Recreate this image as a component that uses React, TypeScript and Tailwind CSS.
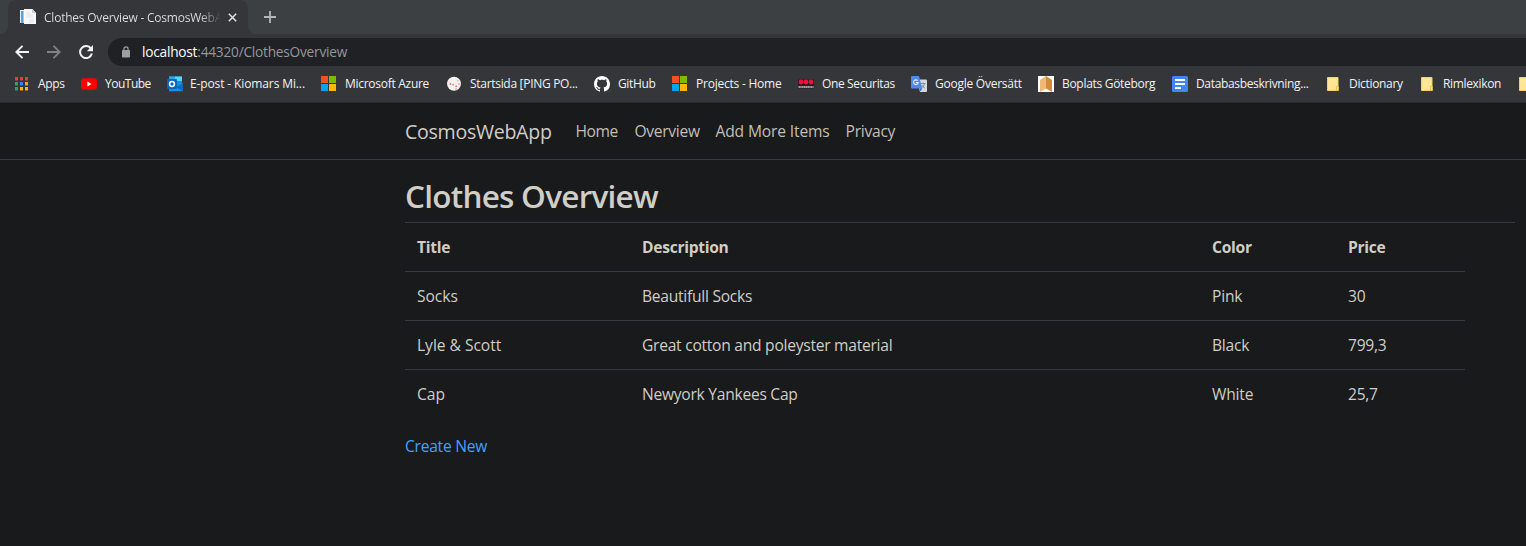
import type { ReactNode } from 'react';

function MicrosoftIcon() {
  return (
    <svg width="16" height="16" viewBox="0 0 16 16" shapeRendering="crispEdges">
      <path fill="#f25022" d="M0 0h7v7H0z" />
      <path fill="#7fba00" d="M8 0h7v7H8z" />
      <path fill="#00a4ef" d="M0 8h7v7H0z" />
      <path fill="#ffb900" d="M8 8h7v7H8z" />
    </svg>
  );
}

function AppsIcon() {
  const colors = ['#ee3a36', '#ee3a36', '#ee3a36', '#34a25a', '#2a86f3', '#f3a90c', '#34a25a', '#f3b40c', '#f3b40c'];
  return (
    <svg width="14" height="14" viewBox="0 0 14 14" shapeRendering="crispEdges">
      {colors.map((c, i) => (
        <g key={i}>
          <rect x={(i % 3) * 5} y={Math.floor(i / 3) * 5} width="3" height="3" fill={c} />
          <rect x={(i % 3) * 5} y={Math.floor(i / 3) * 5 + 3} width="3" height="1" fill={c} opacity="0.45" />
        </g>
      ))}
    </svg>
  );
}

function YouTubeIcon() {
  return (
    <svg width="16" height="16" viewBox="0 0 16 16">
      <rect x="0" y="2.3" width="16" height="11.4" rx="3" fill="#f00" />
      <path d="M6.4 5.6v4.8L10.6 8z" fill="#fff" />
    </svg>
  );
}

function OutlookIcon() {
  return (
    <svg width="16" height="16" viewBox="0 0 16 16">
      <path d="M2 .5h13v9H2z" fill="#1490df" />
      <path d="M8 .5h7V5H8z" fill="#50d9ff" />
      <path d="M2 .5h6V5H2z" fill="#28a8ea" />
      <path d="M2 8 16 7.5v7.8H2z" fill="#1a8fe0" />
      <path d="M16 7.5v7.8L9 11z" fill="#1068b8" />
      <rect x="0" y="3" width="10" height="10" rx="1" fill="#0a64bd" />
      <circle cx="5" cy="8" r="2.4" fill="none" stroke="#fff" strokeWidth="1.5" />
    </svg>
  );
}

function PingPongIcon() {
  return (
    <svg width="16" height="16" viewBox="0 0 16 16">
      <circle cx="7" cy="7.8" r="7" fill="#f6f2f0" />
      <g fill="#e0584e" opacity=".8">
        <circle cx="3.4" cy="8" r=".9" />
        <circle cx="6.2" cy="8.600" r=".9" />
        <circle cx="9.2" cy="10.200" r="1" />
        <circle cx="12" cy="8" r=".8" />
        <circle cx="9" cy="13" r=".7" />
      </g>
      <circle cx="10.8" cy="4.600" r=".9" fill="#eeb3ac" />
    </svg>
  );
}

function GitHubIcon() {
  return (
    <svg width="16" height="16" viewBox="0 0 16 16" fill="#fff">
      <path d="M8 0C3.58 0 0 3.58 0 8c0 3.54 2.29 6.53 5.47 7.59.4.07.55-.17.55-.38 0-.19-.01-.82-.01-1.49-2.01.37-2.53-.49-2.69-.94-.09-.23-.48-.94-.82-1.13-.28-.15-.68-.52-.01-.53.63-.01 1.08.58 1.23.82.72 1.21 1.87.87 2.33.66.07-.52.28-.87.51-1.07-1.78-.2-3.64-.89-3.64-3.95 0-.87.31-1.59.82-2.15-.08-.2-.36-1.02.08-2.12 0 0 .67-.21 2.2.82.64-.18 1.32-.27 2-.27s1.36.09 2 .27c1.53-1.04 2.2-.82 2.2-.82.44 1.1.16 1.92.08 2.12.51.56.82 1.27.82 2.15 0 3.07-1.87 3.75-3.65 3.95.29.25.54.73.54 1.48 0 1.07-.01 1.93-.01 2.2 0 .21.15.46.55.38A8.01 8.01 0 0 0 16 8c0-4.42-3.58-8-8-8z" />
    </svg>
  );
}

function SecuritasIcon() {
  return (
    <svg width="16" height="16" viewBox="0 0 16 16">
      <path d="M0 3.5h16v9H0z" fill="#30191d" />
      <g fill="#f0103c">
        <circle cx="3" cy="6" r="2.4" />
        <circle cx="8" cy="6" r="2.4" />
        <circle cx="13" cy="6" r="2.4" />
      </g>
      <path d="M.5 11h15" stroke="#d9d9d9" strokeWidth="1.6" strokeDasharray="1.4 .4" />
    </svg>
  );
}

function TranslateIcon() {
  return (
    <svg width="16" height="16" viewBox="0 0 16 16">
      <path d="M6 3.5h9a1 1 0 0 1 1 1V15a1 1 0 0 1-1 1H9z" fill="#d5d8dc" />
      <path d="M9.5 7.5h5M12 6.5v1M13.6 7.5c-.4 2-1.6 3.5-3 4.4M10.8 9c.8 1.500 1.800 2.500 3.200 3.200" stroke="#7b8f9b" strokeWidth="1" fill="none" />
      <path d="M1 0h7l3.200 12.500H1a1 1 0 0 1-1-1V1a1 1 0 0 1 1-1z" fill="#4d8af0" />
      <path d="M8.500 12.500h2.700L9.500 15.500z" fill="#3564c4" />
      <path d="M6.700 4.700A2.300 2.300 0 1 0 7.200 6.500H5" stroke="#e8f0ff" strokeWidth="1.100" fill="none" />
    </svg>
  );
}

function BoplatsIcon() {
  return (
    <svg width="16" height="16" viewBox="0 0 16 16">
      <path d="M0 0h16v16H0z" fill="#fff" />
      <path d="M8 0v12.500L2 16V4z" fill="#f0b878" />
      <path d="M8 0v12.500l6 3.500V4z" fill="#d38b35" />
    </svg>
  );
}

function DocsIcon() {
  return (
    <svg width="16" height="16" viewBox="0 0 16 16">
      <rect width="16" height="16" rx="1.500" fill="#4285f4" />
      <path d="M3 3h10v2H3zM3 7h10v2H3zM3 11h6v2H3z" fill="#fff" />
    </svg>
  );
}

function FolderIcon() {
  return (
    <svg width="16" height="16" viewBox="0 0 16 16">
      <path d="M.5 1.500h10.500v13H.5z" fill="#ffe694" stroke="#f3d268" />
      <path d="M9.500 10.500h2v4h-2z" fill="#ffe694" stroke="#e2b93b" strokeWidth=".8" />
    </svg>
  );
}

function PageIcon() {
  return (
    <svg width="16" height="16" viewBox="0 0 16 16">
      <path d="M0 1h11v13H0z" fill="#e9eef2" />
      <path d="M1 2h2.500v12H1z" fill="#5ea3cf" />
      <path d="M4 0h8.500L16 4v11H4z" fill="#f8f8f8" />
      <path d="M12 0v4h4z" fill="#c9cdd1" />
      <path d="M6 4h4M6 6h7M6 8h7M9 11h5M9 13h5" stroke="#d9dcdf" strokeWidth=".7" />
    </svg>
  );
}

const bookmarks: { label: string; icon: ReactNode; box: string; text: string }[] = [
  { label: 'Apps', icon: <AppsIcon />, box: 'w-[66px] gap-[9px]', text: 'tracking-[-0.3px]' },
  { label: 'YouTube', icon: <YouTubeIcon />, box: 'w-[86px] gap-2', text: 'tracking-[-0.5px]' },
  { label: 'E-post - Kiomars Mi...', icon: <OutlookIcon />, box: 'w-[154px] gap-[7px]', text: 'tracking-[-0.12px]' },
  { label: 'Microsoft Azure', icon: <MicrosoftIcon />, box: 'w-[126px] gap-2', text: 'tracking-[-0.28px]' },
  { label: 'Startsida [PING PO...', icon: <PingPongIcon />, box: 'w-[147px] gap-[7px]', text: 'tracking-[-0.3px]' },
  { label: 'GitHub', icon: <GitHubIcon />, box: 'w-[78px] gap-2', text: 'tracking-[-0.35px]' },
  { label: 'Projects - Home', icon: <MicrosoftIcon />, box: 'w-[126px] gap-2', text: 'tracking-[-0.23px]' },
  { label: 'One Securitas', icon: <SecuritasIcon />, box: 'w-[113px] gap-2', text: 'tracking-[-0.36px]' },
  { label: 'Google Översätt', icon: <TranslateIcon />, box: 'w-[127px] gap-2', text: 'tracking-[-0.25px]' },
  { label: 'Boplats Göteborg', icon: <BoplatsIcon />, box: 'w-[134px] gap-2', text: 'tracking-[-0.3px]' },
  { label: 'Databasbeskrivning...', icon: <DocsIcon />, box: 'w-[155px] gap-2', text: 'tracking-[-0.34px]' },
  { label: 'Dictionary', icon: <FolderIcon />, box: 'w-[94px] gap-1.5', text: 'tracking-[-0.33px]' },
  { label: 'Rimlexikon', icon: <FolderIcon />, box: 'w-[98px] gap-1.5', text: 'tracking-[-0.35px]' },
  { label: '', icon: <FolderIcon />, box: 'w-4', text: '' },
];

const links = [
  { label: 'Home', cls: 'w-[59px] tracking-[-0.45px]' },
  { label: 'Overview', cls: 'w-[81px] tracking-[-0.3px]' },
  { label: 'Add More Items', cls: 'w-[130px] tracking-[-0.14px]' },
  { label: 'Privacy', cls: 'w-[60px] tracking-[-0.25px]' },
];

const rows = [
  ['Socks', 'Beautifull Socks', 'Pink', '30'],
  ['Lyle & Scott', 'Great cotton and poleyster material', 'Black', '799,3'],
  ['Cap', 'Newyork Yankees Cap', 'White', '25,7'],
];

const columnTracking = ['tracking-[-0.03px]', 'tracking-[-0.26px]', 'tracking-[-0.2px]', 'tracking-[-0.26px]'];

function Browser() {
  return (
    <header className="flex h-[103px] flex-col border-b border-[#28292b] bg-[#35363a]">
      <div className="flex h-[34px] shrink-0 items-stretch bg-[#3c4043]">
        <svg className="shrink-0" width="8" height="34">
          <path d="M8 26v8H0a8 8 0 0 0 8-8z" fill="#35363a" />
        </svg>
        <div className="flex w-60 shrink-0 items-center rounded-t-lg bg-[#35363a] pl-3">
          <PageIcon />
          <span className="ml-2 w-[177px] overflow-hidden bg-linear-to-r from-[#dfe1e5] from-88% to-transparent to-100% bg-clip-text pt-px text-[12px] tracking-[-0.22px] whitespace-nowrap text-transparent">
            Clothes Overview - CosmosWebApp
          </span>
          <svg className="ml-[7px]" width="9" height="9" viewBox="0 0 9 9">
            <path d="m.8.8 7.400 7.400M8.200.8.8 8.200" stroke="#dfe1e5" strokeWidth="1.500" />
          </svg>
        </div>
        <svg className="shrink-0" width="8" height="34">
          <path d="M0 26v8h8a8 8 0 0 1-8-8z" fill="#35363a" />
        </svg>
        <svg className="mt-[11px] ml-2 shrink-0" width="12" height="12" viewBox="0 0 12 12">
          <path d="M6 0v12M0 6h12" stroke="#b4b7ba" strokeWidth="1.800" />
        </svg>
      </div>
      <div className="flex h-9 shrink-0 items-center pl-[15px]">
        <svg width="14" height="14" viewBox="0 0 14 14" fill="none" stroke="#f1f3f4" strokeWidth="1.900">
          <path d="M14 7H1.500M7.500.8 1.300 7l6.200 6.200" />
        </svg>
        <svg className="ml-[18px]" width="14" height="14" viewBox="0 0 14 14" fill="none" stroke="#808184" strokeWidth="1.900">
          <path d="M0 7h12.500M6.500.8 12.700 7l-6.200 6.200" />
        </svg>
        <svg className="ml-[18px]" width="14" height="14" viewBox="0 0 14 14">
          <path d="M12 3.600A6 6 0 1 0 12.900 8.600" fill="none" stroke="#f1f3f4" strokeWidth="2" />
          <path d="M14 0v6.200H7.800z" fill="#f1f3f4" />
        </svg>
        <div className="ml-[15px] flex h-7 flex-1 items-center rounded-l-full bg-[#202124] pl-[14px]">
          <svg width="8" height="12" viewBox="0 0 8 12">
            <rect y="4" width="8" height="7.500" rx=".8" fill="#9aa0a6" />
            <path d="M1.900 4.500V2.900a2.100 2.100 0 0 1 4.200 0v1.600" fill="none" stroke="#9aa0a6" strokeWidth="1.200" />
          </svg>
          <span className="ml-3 pt-px text-[13.700px] tracking-[-0.23px] whitespace-nowrap text-[#93979b]">
            <span className="text-white">localhost</span>:44320/ClothesOverview
          </span>
        </div>
      </div>
      <div className="flex h-7 items-center overflow-hidden pl-[15px]">
        {bookmarks.map((b, i) => (
          <div key={i} className={`flex shrink-0 items-center ${b.box}`}>
            <span className="shrink-0">{b.icon}</span>
            <span className={`text-[12px] whitespace-nowrap text-[#f1f3f4] ${b.text}`}>{b.label}</span>
          </div>
        ))}
      </div>
    </header>
  );
}

export default function App() {
  return (
    <div className="h-[546px] w-[1526px] overflow-hidden bg-[#181a1b] font-['Open_Sans',sans-serif] text-[#d1cdc7]">
      <Browser />
      <nav className="flex h-[57px] items-center border-b border-[#373b3d] pl-[405px]">
        <span className="w-[170.5px] pt-px text-[19.6px] tracking-[-0.3px] whitespace-nowrap">CosmosWebApp</span>
        {links.map((l) => (
          <a key={l.label} className={`pt-0.5 text-[15.6px] whitespace-nowrap text-[#c4bfb7] ${l.cls}`}>
            {l.label}
          </a>
        ))}
      </nav>
      <main className="pl-[405px]">
        <h1 className="flex h-[62px] items-center pt-2.5 text-[31.5px] font-semibold tracking-[-0.75px] whitespace-nowrap">
          Clothes Overview
        </h1>
        <div className="w-[1110px] border-t border-[#373b3d]">
          <table className="w-[1060px] table-fixed border-collapse text-left text-[15.6px] leading-6">
            <thead>
              <tr className="h-12 border-b border-[#373b3d] font-bold tracking-[-0.28px]">
                <th className="w-[225px] px-3">Title</th>
                <th className="w-[570px] px-3">Description</th>
                <th className="w-[136px] px-3">Color</th>
                <th className="px-3">Price</th>
              </tr>
            </thead>
            <tbody>
              {rows.map((r) => (
                <tr key={r[0]} className="h-[49px] border-b border-[#373b3d] last:border-0">
                  {r.map((c, i) => (
                    <td key={c} className={`px-3 ${columnTracking[i]}`}>{c}</td>
                  ))}
                </tr>
              ))}
            </tbody>
          </table>
        </div>
        <a className="mt-4 block text-[15.6px] leading-6 tracking-[-0.25px] text-[#3fa2ff]">Create New</a>
      </main>
    </div>
  );
}
